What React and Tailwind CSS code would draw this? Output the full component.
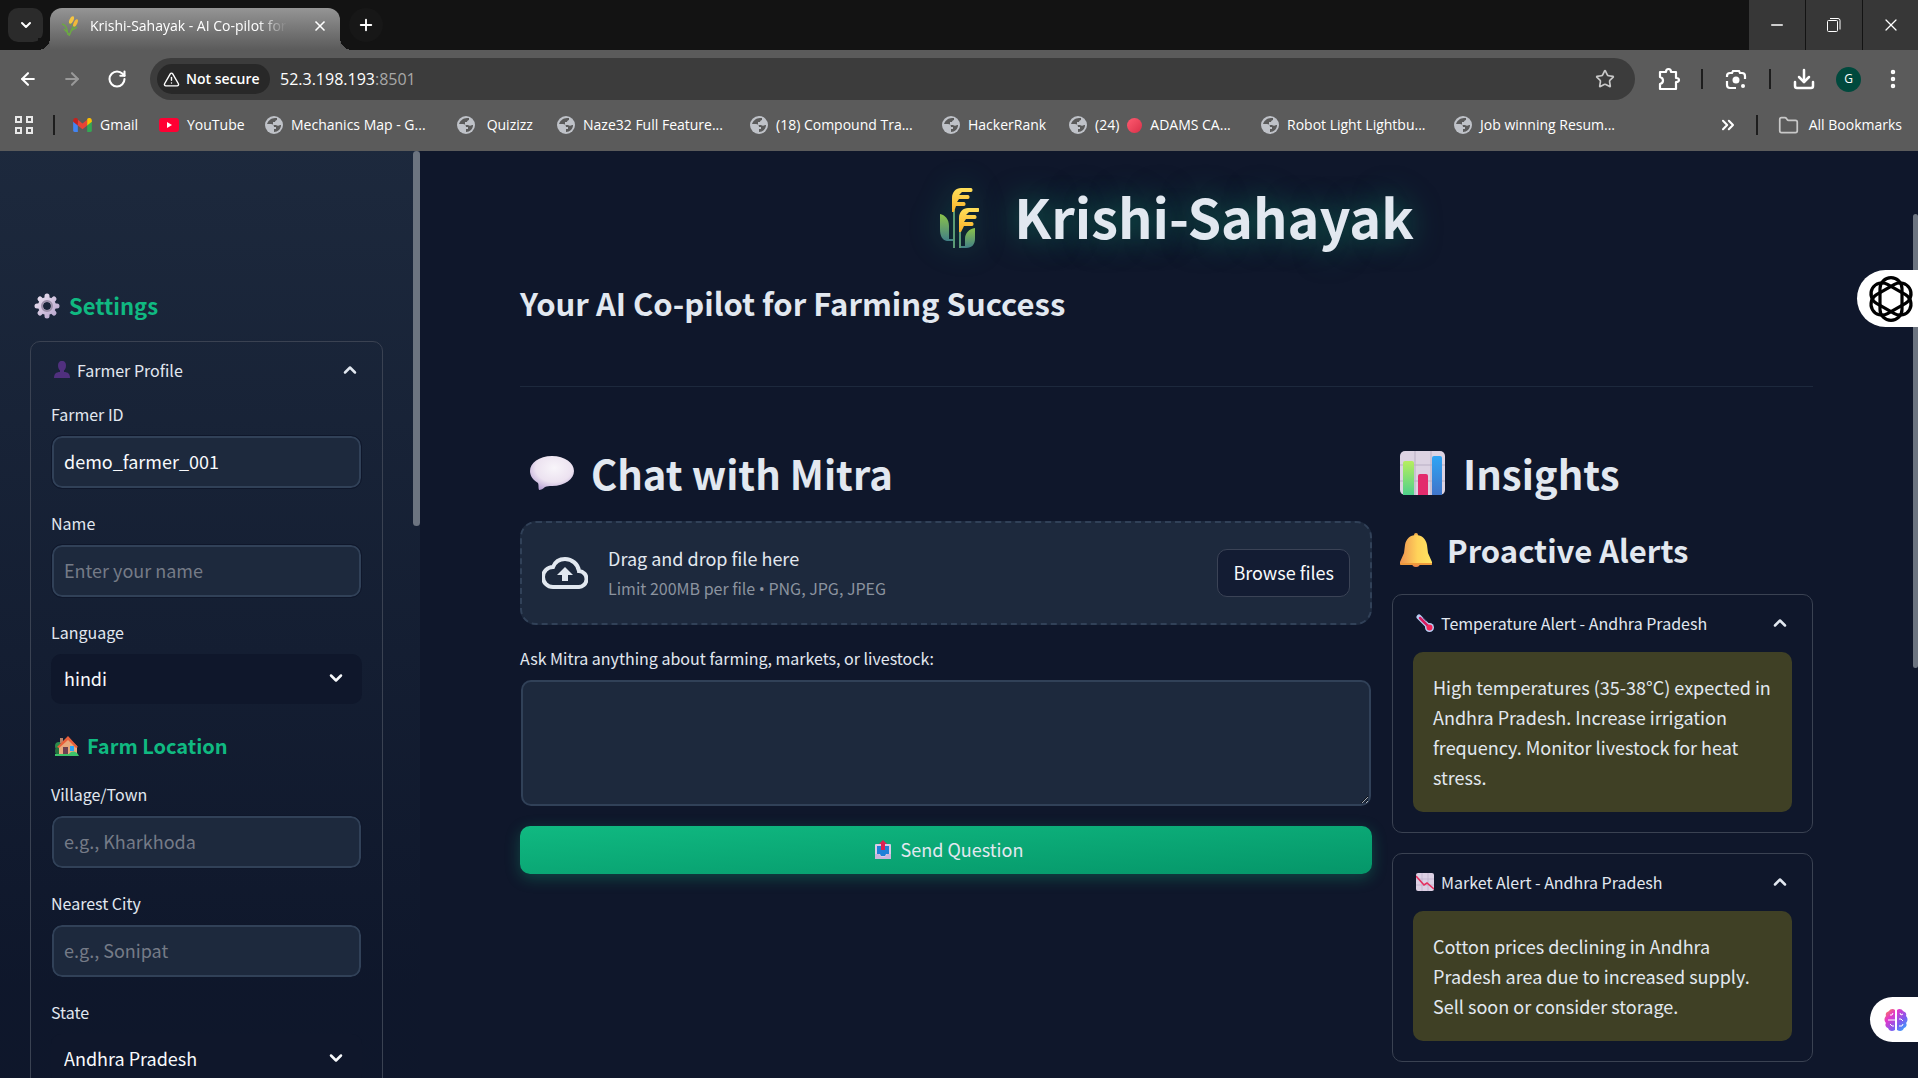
import React, { useState } from "react";
import {
    ArrowLeft, ArrowRight, ChevronDown, ChevronUp, ChevronsRight, Download,
    EllipsisVertical, Folder, Minus, Plus, RotateCw, Star, TriangleAlert, X
} from "lucide-react";

/* ---------- Emoji drawings ---------- */

function WheatIcon({ className }) {
    return (
        <svg viewBox="0 0 40 60" className={className} aria-hidden="true">
            <defs>
                <linearGradient id="ear" x1="0" y1="0" x2="0" y2="1">
                    <stop offset="0" stopColor="#ffe05a" />
                    <stop offset="1" stopColor="#f9b12b" />
                </linearGradient>
                <linearGradient id="leaf" x1="0" y1="0" x2="0" y2="1">
                    <stop offset="0" stopColor="#8bc34a" />
                    <stop offset="1" stopColor="#417f86" />
                </linearGradient>
            </defs>
            <path d="M1 26c5 1 9 5 9 12v13h4v2H8c-5-1-7-5-7-12z" fill="url(#leaf)" />
            <path d="M36 40c-6 1-10 5-10 11v7h-4v2h5c6 0 9-4 9-9z" fill="url(#leaf)" />
            <path d="M15 22v38M21 40v20" stroke="#5b9a75" strokeWidth="2" fill="none" />
            <path d="M13 24V10c0-6 4-10 9-10h10c2 0 2 4 0 4h-9l-3 3h9c2 0 2 4 0 4h-9l-2 3h7c2 0 2 4 0 4h-8l-2 6z" fill="url(#ear)" />
            <path d="M20 44V30c0-6 4-10 9-10h10c2 0 2 4 0 4h-9l-3 3h9c2 0 2 4 0 4h-9l-2 3h8c2 0 2 4 0 4h-8l-3 6z" fill="url(#ear)" />
        </svg>
    );
}

function TabWheatIcon() {
    return (
        <svg viewBox="0 0 18 20" className="h-5 w-[18px] shrink-0" fill="none" aria-hidden="true">
            <path d="M8 20 13 8M7 19C6 12 5 9 1 8M3 13l5 5M11 14l5-3M10 9 8 6" stroke="#6ba843" strokeWidth="1.5" />
            <ellipse cx="10.500" cy="4" rx="2" ry="4" transform="rotate(25 10.500 4)" fill="#f5c542" />
            <ellipse cx="14.500" cy="7" rx="1.800" ry="4" transform="rotate(25 14.500 7)" fill="#f0b93a" />
        </svg>
    );
}

function GearIcon() {
    return (
        <svg viewBox="0 0 26 26" className="size-[26px] shrink-0" aria-hidden="true">
            <defs>
                <linearGradient id="gear" gradientUnits="userSpaceOnUse" x1="2" y1="2" x2="24" y2="24">
                    <stop offset="0" stopColor="#eee4f2" />
                    <stop offset="1" stopColor="#b6a3cb" />
                </linearGradient>
            </defs>
            <path
                d="M13 3v3M13 20v3M3 13h3M20 13h3M6 6l2 2M18 18l2 2M6 20l2-2M18 8l2-2"
                stroke="url(#gear)" strokeWidth="5" strokeLinecap="round"
            />
            <circle cx="13" cy="13" r="6.500" fill="none" stroke="url(#gear)" strokeWidth="5" />
            <circle cx="13" cy="13" r="5" fill="none" stroke="#9a8fa8" strokeWidth="2" />
        </svg>
    );
}

function PersonIcon() {
    return (
        <svg viewBox="0 0 16 17" className="h-[17px] w-4 shrink-0" fill="#50307e" aria-hidden="true">
            <path d="M8 0c3 0 4 2 4 5s-2 5-4 5-4-2-4-5 1-5 4-5z" />
            <path d="M6 8h4v3c4 0 6 2 6 6H0c0-4 2-6 6-6z" />
        </svg>
    );
}

function HouseIcon() {
    return (
        <svg viewBox="0 0 24 20" className="h-5 w-6 shrink-0" aria-hidden="true">
            <circle cx="4" cy="10" r="4" fill="#2b8a4b" />
            <circle cx="4" cy="15" r="4" fill="#24733e" />
            <path d="M5 2h3v5H5z" fill="#b5836b" />
            <path d="M4 10 13 2l9 8v9H4z" fill="#e8a87c" />
            <path d="M2 11 13 0l10 11-2 1-8-8-9 8z" fill="#e9603b" />
            <path d="M8 11h5v8H8z" fill="#6d4150" />
            <path d="M15 10h4v5h-4z" fill="#2aa5f5" />
            <path d="M0 18h14c2-3 7-4 10 2H0z" fill="#3cc46a" />
        </svg>
    );
}

function SpeechIcon() {
    return (
        <svg viewBox="0 0 44 34" className="h-[34px] w-11 shrink-0" aria-hidden="true">
            <defs>
                <radialGradient id="speech" cx=".55" cy=".35" r=".7">
                    <stop offset="0" stopColor="#f8f5fa" />
                    <stop offset=".6" stopColor="#ece2f0" />
                    <stop offset="1" stopColor="#b6a0d3" />
                </radialGradient>
            </defs>
            <path d="M22 0c13 0 22 7 22 15S35 30 22 30c-3 0-5 0-7 1-2 2-4 3-6 3-1-2 0-5-1-7-5-3-8-7-8-12C0 7 9 0 22 0z" fill="url(#speech)" />
        </svg>
    );
}

function BarsIcon() {
    return (
        <svg viewBox="0 0 45 44" className="h-11 w-[45px] shrink-0" aria-hidden="true">
            <defs>
                <linearGradient id="barGreen" x1="0" y1="0" x2="0" y2="1">
                    <stop offset="0" stopColor="#b7ee5f" />
                    <stop offset="1" stopColor="#4fd08b" />
                </linearGradient>
                <linearGradient id="barBlue" x1="0" y1="0" x2="0" y2="1">
                    <stop offset="0" stopColor="#2fa5f5" />
                    <stop offset="1" stopColor="#3f74c9" />
                </linearGradient>
            </defs>
            <rect width="45" height="44" rx="5" fill="#dcd3e2" />
            <path d="M15 0v44M31 0v44M0 14h45M0 30h45" stroke="#b9afc4" />
            <path d="M3 44V12q0-2 2-2h7q2 0 2 2v32z" fill="url(#barGreen)" />
            <path d="M18 44V25q0-2 2-2h6q2 0 2 2v19z" fill="#e32c6d" />
            <path d="M32 44V7q0-2 2-2h6q2 0 2 2v37z" fill="url(#barBlue)" />
        </svg>
    );
}

function BellIcon() {
    return (
        <svg viewBox="0 0 32 34" className="h-[34px] w-8 shrink-0" aria-hidden="true">
            <defs>
                <linearGradient id="bell" x1="0" y1="0" x2="1" y2="0">
                    <stop offset="0" stopColor="#ee9350" />
                    <stop offset=".55" stopColor="#ffd35a" />
                    <stop offset="1" stopColor="#ffe562" />
                </linearGradient>
            </defs>
            <circle cx="16" cy="30" r="4" fill="#f08a4b" />
            <circle cx="16" cy="2" r="2" fill="#f7b04c" />
            <path d="M16 2c6 0 10 4 11 10l1 8 4 9v2q0 1-2 1H2q-2 0-2-1v-2l4-9 1-8C6 6 10 2 16 2z" fill="url(#bell)" />
            <path d="M0 30h32v1q0 1-2 1H2q-2 0-2-1z" fill="#ef9a3c" />
        </svg>
    );
}

function ThermometerIcon() {
    return (
        <svg viewBox="0 0 18 18" className="size-[18px] shrink-0" strokeLinecap="round" aria-hidden="true">
            <path d="m3 3 10 10" stroke="#b9cdf3" strokeWidth="5" />
            <circle cx="13.500" cy="13.500" r="4.500" fill="#b9cdf3" />
            <path d="m4 4 9 9" stroke="#d81b60" strokeWidth="2.500" />
            <circle cx="13.500" cy="13.500" r="3" fill="#f5265a" />
            <path d="m7 4 3 3" stroke="#6d5b8f" strokeWidth="1" />
        </svg>
    );
}

function DownTrendIcon() {
    return (
        <svg viewBox="0 0 18 18" className="size-[18px] shrink-0" fill="none" aria-hidden="true">
            <rect width="18" height="18" rx="2" fill="#dcd0e4" />
            <path d="M6 0v18M12 0v18M0 6h18M0 12h18" stroke="#c0b2cd" strokeWidth=".8" />
            <path d="m0 3 8 9 3-2 7 6" stroke="#e5305f" strokeWidth="1.600" />
        </svg>
    );
}

function OutboxIcon() {
    return (
        <svg viewBox="0 0 16 19" className="h-[19px] w-4 shrink-0" aria-hidden="true">
            <rect y="4" width="16" height="15" rx="1" fill="#d9cbe6" />
            <path d="M2 6h12v8h-3l-1 2H6l-1-2H2z" fill="#1f80d8" />
            <path d="M0 14h4l2 3h4l2-3h4v5H0z" fill="#c9b5dd" />
            <path d="m8 0 4 4h-2v6H6V4H4z" fill="#dc2152" />
        </svg>
    );
}

/* ---------- Browser icons ---------- */

function GlobeIcon() {
    return (
        <svg viewBox="0 0 18 18" className="size-[18px] shrink-0" aria-hidden="true">
            <circle cx="9" cy="9" r="9" fill="#bfc2c8" />
            <path d="M10 2C6 2 3 5 2 8h4c2 0 3 1 3 3h2v2H9v3c4 0 7-3 7-7h-1c-1 1-3 1-4 0V9H8V6h2c0-1 1-2 2-2V2z" fill="#5a5a5a" />
        </svg>
    );
}

function GmailIcon() {
    return (
        <svg viewBox="0 0 20 15" className="h-[14px] w-[19px] shrink-0" aria-hidden="true">
            <path d="M0 3v10q0 2 2 2h3V6z" fill="#4285f4" />
            <path d="M20 3v10q0 2-2 2h-3V6z" fill="#34a853" />
            <path d="m5 2 5 4 5-4v6l-5 4-5-4z" fill="#ea4335" />
            <path d="M0 3c0-3 3-4 5-2v7L0 4z" fill="#c5221f" />
            <path d="M20 3c0-3-3-4-5-2v7l5-4z" fill="#fbbc04" />
        </svg>
    );
}

function YoutubeIcon() {
    return (
        <svg viewBox="0 0 20 14" className="h-[14px] w-5 shrink-0" aria-hidden="true">
            <rect width="20" height="14" rx="3" fill="#ff0033" />
            <path d="m8 4 5 3-5 3z" fill="#fff" />
        </svg>
    );
}

function PuzzleIcon() {
    return (
        <svg viewBox="0 0 24 24" className="size-6" fill="none" stroke="#fff" strokeWidth="2.200" strokeLinejoin="round" aria-hidden="true">
            <path d="M3 5h6c0-4 5-4 5 0h5v6c4 0 4 4 0 4v7H3v-5c4-1 4-6 0-7z" />
        </svg>
    );
}

function LensIcon() {
    return (
        <svg viewBox="0 0 22 22" className="size-[22px]" fill="none" stroke="#fff" strokeWidth="2.200" aria-hidden="true">
            <path d="M2 9V8q0-3 3-3h2l1-2h6l1 2h2q3 0 3 3v3M2 13v4q0 3 3 3h6" />
            <circle cx="11" cy="12" r="3.500" fill="#fff" stroke="none" />
            <circle cx="18" cy="18" r="2" fill="#fff" stroke="none" />
        </svg>
    );
}

function AppsIcon() {
    return (
        <svg viewBox="0 0 18 18" className="size-[18px]" fill="none" stroke="#e8e8e8" strokeWidth="2" aria-hidden="true">
            <path d="M1 1h5v5H1zM12 1h5v5h-5zM1 12h5v5H1zM12 12h5v5h-5z" />
        </svg>
    );
}

function CloudUploadIcon() {
    return (
        <svg viewBox="0 0 46 32" className="h-8 w-[46px] shrink-0" aria-hidden="true">
            <path d="M11 30h25a8 8 0 0 0 1-16C36 7 30 2 23 2c-6 0-10 3-12 8a10 10 0 0 0 0 20z" fill="none" stroke="#e2e8f0" strokeWidth="4" />
            <path d="m23 10 8 8h-5v6h-6v-6h-5z" fill="#e2e8f0" />
        </svg>
    );
}

function KnotIcon() {
    return (
        <svg viewBox="0 0 46 46" className="size-[46px]" fill="none" stroke="#000" strokeWidth="3.200" aria-hidden="true">
            <rect x="12" y="1.600" width="22" height="42.800" rx="11" />
            <rect x="12" y="1.600" width="22" height="42.800" rx="11" transform="rotate(60 23 23)" />
            <rect x="12" y="1.600" width="22" height="42.800" rx="11" transform="rotate(120 23 23)" />
        </svg>
    );
}

function BrainIcon() {
    return (
        <svg viewBox="0 0 24 24" className="size-6" aria-hidden="true">
            <defs>
                <linearGradient id="brain" x1="0" y1="0" x2="1" y2="1">
                    <stop offset="0" stopColor="#fb923c" />
                    <stop offset=".3" stopColor="#e536c9" />
                    <stop offset=".65" stopColor="#7c5cf0" />
                    <stop offset="1" stopColor="#22b8ff" />
                </linearGradient>
            </defs>
            <path d="M11 2v20c-3 2-6 1-7-2-3-1-3-4-2-5-2-2-2-5 0-7-1-3 1-4 3-5 1-2 4-3 6-1zM13 2c2-2 5-1 6 1 2 1 4 2 3 5 2 2 2 5 0 7 1 1 1 4-2 5-1 3-4 4-7 2z" fill="url(#brain)" />
            <path d="M4 12h7M6 7h2l1-2M6 16l2 2h2M16 5l1 2 2-1M15 11h2l2 2M15 18h3l1-2" stroke="#fff" fill="none" />
        </svg>
    );
}

/* ---------- Browser frame ---------- */

const bookmarks = [
    { name: "Gmail", icon: <GmailIcon />, width: "w-[86px]" },
    { name: "YouTube", icon: <YoutubeIcon />, width: "w-[106px]" },
    { name: "Mechanics Map - G...", width: "w-[192px]" },
    { name: "\u00a0Quizizz", width: "w-[100px]" },
    { name: "Naze32 Full Feature...", width: "w-[193px]" },
    { name: "(18) Compound Tra...", width: "w-[192px]" },
    { name: "HackerRank", width: "w-[127px]" },
    { name: "ADAMS CA...", count: "(24)", width: "w-[192px]" },
    { name: "Robot Light Lightbu...", width: "w-[193px]" },
    { name: "Job winning Resum...", width: "w-[170px]" },
];

function TabStrip() {
    return (
        <div className="flex h-[50px] bg-[#131313] pl-2">
            <button aria-label="Search tabs" className="mt-2 flex h-[34px] w-[35px] items-center justify-center rounded-[10px] bg-[#2b2b2b] text-white">
                <ChevronDown size={16} strokeWidth={3} />
            </button>

            <div className="relative mt-2 ml-[7px] flex h-[42px] w-[290px] items-center rounded-t-xl bg-gradient-to-b from-[#959595] to-[#5b5b5b] pr-3 pb-[6px] pl-[11px] text-white">
                <span className="absolute bottom-0 -left-3 size-3 bg-[radial-gradient(circle_at_0_0,#131313_12px,#5b5b5b_12px)]" />
                <span className="absolute -right-3 bottom-0 size-3 bg-[radial-gradient(circle_at_100%_0,#131313_12px,#5b5b5b_12px)]" />
                <TabWheatIcon />
                <span className="ml-[11px] text-sm whitespace-nowrap [mask-image:linear-gradient(to_right,#000_85%,transparent)]">
                    Krishi-Sahayak - AI Co-pilot for
                </span>
                <button aria-label="Close tab" className="ml-auto">
                    <X size={16} strokeWidth={2.5} />
                </button>
            </div>

            <button aria-label="New tab" className="mt-2 ml-[9px] flex size-[34px] items-center justify-center rounded-full bg-[#171717] text-white">
                <Plus size={18} strokeWidth={2.5} />
            </button>

            <div className="ml-auto flex gap-px text-white">
                <button aria-label="Minimize" className="flex w-14 items-center justify-center bg-[#373737]">
                    <Minus size={18} strokeWidth={2} />
                </button>
                <button aria-label="Restore" className="flex w-14 items-center justify-center bg-[#373737]">
                    <svg viewBox="0 0 14 14" className="size-[14px]" fill="none" stroke="currentColor">
                        <rect x=".5" y="2.500" width="10" height="11" rx="1" />
                        <path d="M3 .5h8q2 0 2 2v9" />
                    </svg>
                </button>
                <button aria-label="Close" className="flex w-[55px] items-center justify-center bg-[#373737]">
                    <X size={20} strokeWidth={1.5} />
                </button>
            </div>
        </div>
    );
}

function Toolbar() {
    return (
        <div className="flex h-[58px] items-center bg-[#5b5b5b] pr-[13px] pl-[18px] text-white">
            <button aria-label="Back"><ArrowLeft size={20} strokeWidth={2.5} /></button>
            <button aria-label="Forward" className="ml-6 text-[#999999]"><ArrowRight size={20} strokeWidth={2.5} /></button>
            <button aria-label="Reload" className="ml-[25px]"><RotateCw size={20} strokeWidth={2.5} /></button>

            <div className="ml-[23px] flex h-[42px] flex-1 items-center rounded-full bg-[#3c3c3c] pr-5 pl-[7px]">
                <button className="flex h-[30px] w-[113px] items-center gap-[6px] rounded-full bg-[#282828] pl-[6px] text-sm font-semibold whitespace-nowrap">
                    <TriangleAlert size={17} strokeWidth={2} />
                    Not secure
                </button>
                <span className="ml-[10px] text-base">
                    52.3.198.193<span className="text-[#a8a8a8]">:8501</span>
                </span>
                <button aria-label="Bookmark this page" className="ml-auto text-[#c8c8c8]"><Star size={20} strokeWidth={2} /></button>
            </div>

            <div className="flex items-center">
                <button aria-label="Extensions" className="ml-[22px]"><PuzzleIcon /></button>
                <span className="ml-5 h-5 w-[2px] bg-[#1d1d1d]" />
                <button aria-label="Lens" className="ml-[22px]"><LensIcon /></button>
                <span className="ml-[22px] h-5 w-[2px] bg-[#1d1d1d]" />
                <button aria-label="Downloads" className="ml-[21px]"><Download size={24} strokeWidth={2.5} /></button>
                <button aria-label="Profile" className="ml-5 flex size-[25px] items-center justify-center rounded-full bg-[#00493d] text-xs">G</button>
                <button aria-label="Menu" className="ml-5"><EllipsisVertical size={24} strokeWidth={2.5} /></button>
            </div>
        </div>
    );
}

function BookmarkBar() {
    return (
        <div className="flex h-[43px] items-center bg-[#5b5b5b] pr-4 pb-[9px] pl-[15px] text-sm whitespace-nowrap text-white">
            <button aria-label="Apps"><AppsIcon /></button>
            <span className="ml-5 h-5 w-[2px] bg-[#1d1d1d]" />
            <nav className="ml-[18px] flex">
                {bookmarks.map((mark) => (
                    <a href="#" key={mark.name} className={`flex shrink-0 items-center gap-2 ${mark.width}`}>
                        {mark.icon || <GlobeIcon />}
                        {mark.count && (
                            <>
                                <span>{mark.count}</span>
                                <span className="size-[15px] rounded-full bg-gradient-to-br from-[#ff5a70] to-[#d92f49]" />
                            </>
                        )}
                        <span>{mark.name}</span>
                    </a>
                ))}
            </nav>
            <button aria-label="More bookmarks" className="ml-auto"><ChevronsRight size={20} strokeWidth={2.5} /></button>
            <span className="ml-[18px] h-5 w-[2px] bg-[#1d1d1d]" />
            <a href="#" className="ml-5 flex items-center gap-[10px]">
                <Folder size={21} strokeWidth={2} className="text-[#c8c8c8]" />
                All Bookmarks
            </a>
        </div>
    );
}

/* ---------- App parts ---------- */

function Expander({ icon, title, children }) {
    const [open, setOpen] = useState(true);

    return (
        <section className="rounded-[10px] border border-[#3a4252]">
            <button
                onClick={() => setOpen(!open)}
                className="flex h-[57px] w-full items-center gap-[7px] pr-[22px] pb-[2px] pl-[23px] text-base text-slate-200"
            >
                {icon}
                <span>{title}</span>
                <span className="ml-auto">
                    {open ? <ChevronUp size={20} strokeWidth={3} /> : <ChevronDown size={20} strokeWidth={3} />}
                </span>
            </button>
            {open && <div className="px-5 pb-5">{children}</div>}
        </section>
    );
}

function Field({ id, label, ...props }) {
    return (
        <div>
            <label htmlFor={id} className="mb-[7px] block text-base leading-[30px] text-slate-200">{label}</label>
            <div className="px-px">
                <input
                    id={id}
                    className="h-[52px] w-full rounded-[10px] border-2 border-slate-700 bg-slate-800 px-[10px] pb-[2px] text-lg text-slate-50 outline-1 outline-slate-900 placeholder:text-[#757b87]"
                    {...props}
                />
            </div>
        </div>
    );
}

function SelectField({ id, label, options }) {
    return (
        <div>
            <label htmlFor={id} className="mb-[7px] block text-base leading-[30px] text-slate-200">{label}</label>
            <div className="relative">
                <select id={id} className="h-[50px] w-full appearance-none rounded-[10px] bg-slate-900 px-[13px] pb-[3px] text-lg text-slate-50">
                    {options.map((o) => <option key={o}>{o}</option>)}
                </select>
                <ChevronDown size={20} strokeWidth={3} className="pointer-events-none absolute top-[14px] right-4 text-slate-50" />
            </div>
        </div>
    );
}

function Sidebar() {
    return (
        <aside className="flex w-[420px] shrink-0 overflow-hidden bg-gradient-to-b from-slate-800 to-slate-900 to-90%">
            <div className="flex-1 px-[30px] pt-[136px]">
                <h2 className="mb-[17px] flex h-[37px] items-center gap-[9px] pl-1 text-[22px] font-bold text-[#10b981]">
                    <GearIcon />
                    Settings
                </h2>
                <Expander icon={<PersonIcon />} title="Farmer Profile">
                    <div className="flex flex-col gap-5">
                        <Field id="farmer-id" label="Farmer ID" defaultValue="demo_farmer_001" />
                        <Field id="name" label="Name" placeholder="Enter your name" />
                        <SelectField id="language" label="Language" options={["hindi", "english", "telugu"]} />
                        <h3 className="flex h-[35px] items-center gap-2 pt-2 pl-1 text-xl font-bold text-[#10b981]">
                            <HouseIcon />
                            Farm Location
                        </h3>
                        <Field id="village" label="Village/Town" placeholder="e.g., Kharkhoda" />
                        <Field id="city" label="Nearest City" placeholder="e.g., Sonipat" />
                        <SelectField id="state" label="State" options={["Andhra Pradesh", "Haryana", "Punjab"]} />
                    </div>
                </Expander>
            </div>
            <div className="w-[7px]">
                <div className="h-[40.5%] rounded-full bg-[#6c7480]" />
            </div>
        </aside>
    );
}

function ChatPanel() {
    return (
        <section className="min-w-0 flex-[1_1_calc(66.6667%-20px)]">
            <h2 className="mb-[18px] flex h-[60px] items-center gap-[17px] pl-[10px] text-[40px] font-bold text-slate-200">
                <SpeechIcon />
                Chat with Mitra
            </h2>

            <div className="flex h-[104px] items-center rounded-2xl border-2 border-dashed border-slate-700 bg-slate-800 px-5">
                <CloudUploadIcon />
                <div className="ml-5">
                    <p className="text-lg leading-[30px] text-slate-200">Drag and drop file here</p>
                    <p className="text-base leading-[30px] text-[#8b939f]">
                        Limit 200MB per file <span className="font-['Open_Sans',sans-serif]">•</span> PNG, JPG, JPEG
                    </p>
                </div>
                <button className="ml-auto h-12 rounded-[10px] border border-[#3b4356] bg-[#131c33] px-[15px] pb-[2px] text-lg text-slate-50">
                    Browse files
                </button>
            </div>

            <label htmlFor="question" className="mt-[18px] mb-[7px] block text-base leading-[30px] text-slate-200">
                Ask Mitra anything about farming, markets, or livestock:
            </label>
            <div className="px-px">
                <textarea
                    id="question"
                    className="block h-[126px] w-full resize-y rounded-[10px] border-2 border-slate-700 bg-slate-800 p-3 text-lg text-slate-50"
                />
            </div>

            <button className="mt-5 flex h-12 w-full items-center justify-center gap-[10px] rounded-[10px] bg-linear-to-br/srgb from-[#10b981] to-[#059669] pb-[2px] pl-[6px] text-lg text-slate-200 shadow-[0_4px_15px_rgba(16,185,129,0.3)]">
                <OutboxIcon />
                Send Question
            </button>
        </section>
    );
}

const alerts = [
    {
        icon: <ThermometerIcon />,
        title: "Temperature Alert - Andhra Pradesh",
        text: "High temperatures (35-38°C) expected in Andhra Pradesh. Increase irrigation frequency. Monitor livestock for heat stress.",
    },
    {
        icon: <DownTrendIcon />,
        title: "Market Alert - Andhra Pradesh",
        text: "Cotton prices declining in Andhra Pradesh area due to increased supply. Sell soon or consider storage.",
    },
];

function InsightsPanel() {
    return (
        <section className="min-w-0 flex-[1_1_calc(33.3333%-20px)]">
            <h2 className="mb-[25px] flex h-[60px] items-center gap-[18px] pl-2 text-[40px] font-bold text-slate-200">
                <BarsIcon />
                Insights
            </h2>
            <h3 className="mb-[22px] flex h-11 items-center gap-[15px] pl-2 text-[31px] font-bold text-slate-200">
                <BellIcon />
                Proactive Alerts
            </h3>
            <div className="flex flex-col gap-5">
                {alerts.map((alert) => (
                    <Expander key={alert.title} icon={alert.icon} title={alert.title}>
                        <p className="rounded-[10px] bg-[#3f4025] p-5 text-lg leading-[30px] text-slate-200">{alert.text}</p>
                    </Expander>
                ))}
            </div>
        </section>
    );
}

export default function App() {
    return (
        <div className="flex h-screen flex-col overflow-hidden bg-slate-900">
            <header className="shrink-0 font-['Open_Sans',sans-serif]">
                <TabStrip />
                <Toolbar />
                <BookmarkBar />
            </header>

            <div className="relative flex min-h-0 flex-1 font-['Noto_Sans_CJK_SC',sans-serif]">
                <Sidebar />

                <main className="min-w-0 flex-1 overflow-hidden px-[100px] pt-[19px]">
                    <h1 className="flex h-[90px] items-center justify-center gap-[35px] pl-5 text-[54px] font-bold text-slate-200 [text-shadow:0_0_30px_rgba(16,185,129,0.5)]">
                        <WheatIcon className="mt-[5px] h-[60px] w-10 shrink-0 drop-shadow-[0_0_15px_rgba(16,185,129,0.3)]" />
                        Krishi-Sahayak
                    </h1>
                    <h2 className="mt-[22px] text-[31px] leading-[42px] font-bold text-slate-200">
                        Your AI Co-pilot for Farming Success
                    </h2>
                    <hr className="mt-[62px] mb-14 border-slate-800" />
                    <div className="flex gap-5">
                        <ChatPanel />
                        <InsightsPanel />
                    </div>
                </main>

                <div className="w-[5px] shrink-0 pt-[63px]">
                    <div className="h-[52.5%] rounded-full bg-[#6c7480]" />
                </div>

                {/* Extension buttons docked on the right edge */}
                <button aria-label="Open assistant" className="absolute top-[119px] right-0 flex h-[57px] w-[61px] items-center rounded-l-full bg-white pl-[11px]">
                    <KnotIcon />
                </button>
                <button aria-label="Open brain tools" className="absolute right-0 bottom-9 flex h-[45px] w-12 items-center rounded-l-full bg-white pl-[14px]">
                    <BrainIcon />
                </button>
            </div>
        </div>
    );
}
